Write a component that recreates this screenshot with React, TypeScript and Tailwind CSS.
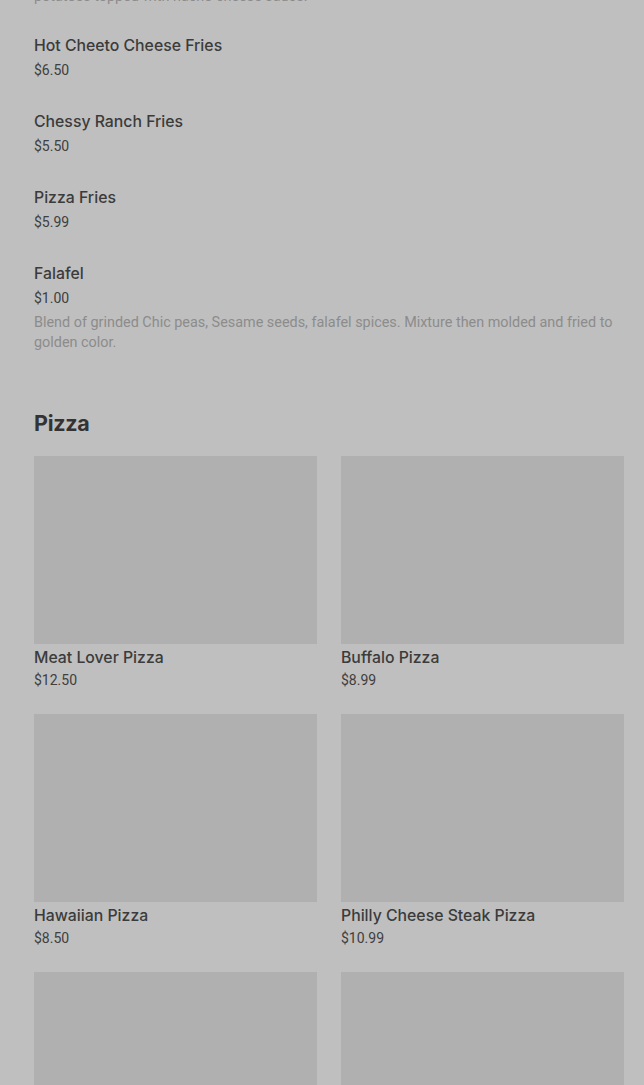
import React from 'react';

const fries = [
  { name: 'Hot Cheeto Cheese Fries', price: '$6.50' },
  { name: 'Chessy Ranch Fries', price: '$5.50' },
  { name: 'Pizza Fries', price: '$5.99' },
  {
    name: 'Falafel',
    price: '$1.00',
    desc: 'Blend of grinded Chic peas, Sesame seeds, falafel spices. Mixture then molded and fried to golden color.',
  },
];

const pizzas = [
  { name: 'Meat Lover Pizza', price: '$12.50' },
  { name: 'Buffalo Pizza', price: '$8.99' },
  { name: 'Hawaiian Pizza', price: '$8.50' },
  { name: 'Philly Cheese Steak Pizza', price: '$10.99' },
  { name: 'Veggie Pizza', price: '$9.50' },
  { name: 'Pepperoni Pizza', price: '$8.99' },
];

const App: React.FC = () => {
  return (
    <div className="h-[1085px] bg-[#bfbfbf] overflow-hidden" style={{ fontFamily: 'Inter, "Noto Sans", sans-serif' }}>
      <div className="pl-[34px] pr-[20px] -mt-[13px]">
        {/* tail of the previous item */}
        <p className="text-[14.4px] leading-[20px] text-[#8c8c8c]" style={{ fontFamily: 'Roboto, sans-serif' }}>
          potatoes topped with nacho cheese sauce.
        </p>

        {/* Fries */}
        <div className="mt-[26px] flex flex-col gap-[29px]">
          {fries.map((item) => (
            <div key={item.name}>
              <div className="pt-[1px] text-[15.8px] leading-[24px] font-medium text-[#3b3b3b]">{item.name}</div>
              <div className="mt-[2px] text-[14px] leading-[20px] text-[#404040]" style={{ fontFamily: 'Roboto, sans-serif' }}>
                {item.price}
              </div>
              {item.desc && (
                <p className="mt-[5px] text-[14.4px] leading-[20px] text-[#8c8c8c]" style={{ fontFamily: 'Roboto, sans-serif' }}>
                  {item.desc}
                </p>
              )}
            </div>
          ))}
        </div>

        {/* Pizza */}
        <h2 className="mt-[55px] text-[21.5px] leading-[30px] font-bold text-[#333333] tracking-[-0.3px]">Pizza</h2>
        <div className="mt-[18px] grid grid-cols-2 gap-x-[24px] gap-y-[23px]">
          {pizzas.map((p) => (
            <div key={p.name}>
              <div className="h-[188px] bg-[#b0b0b0]" />
              <div className="mt-[3px] text-[15.8px] leading-[22px] font-medium text-[#3b3b3b]">{p.name}</div>
              <div className="text-[14px] leading-[22px] text-[#404040]" style={{ fontFamily: 'Roboto, sans-serif' }}>
                {p.price}
              </div>
            </div>
          ))}
        </div>
      </div>
    </div>
  );
};

export default App;
